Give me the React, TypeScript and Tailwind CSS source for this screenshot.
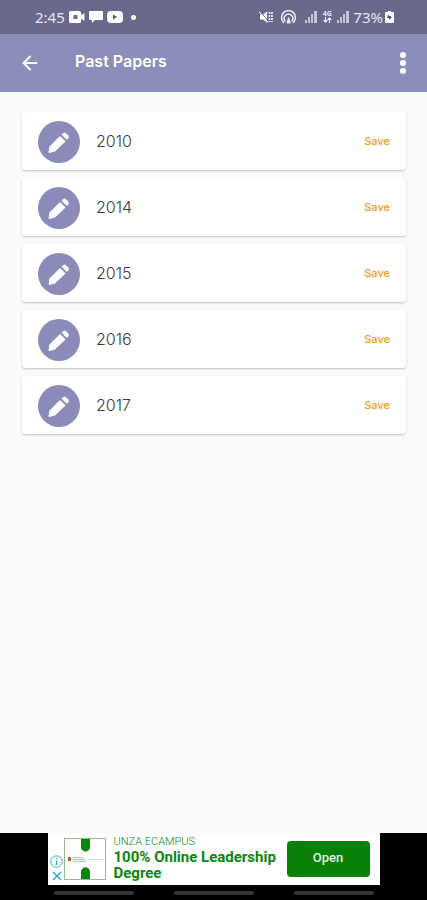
import { ArrowLeft } from 'lucide-react'

const papers = ['2010', '2014', '2015', '2016', '2017']

function SignalIcon() {
  return (
    <svg width="12" height="12" viewBox="0 0 12 12" fill="#dcdcea" aria-hidden="true">
      <rect x="0" y="9" width="2" height="3" opacity=".8" />
      <rect x="3" y="6" width="2" height="6" opacity=".8" />
      <rect x="6" y="3" width="2" height="9" opacity=".8" />
      <rect x="9" y="0" width="3" height="12" opacity=".8" />
    </svg>
  )
}

function StatusBar() {
  return (
    <div className="flex h-[34px] items-center justify-between bg-[#68698b] pl-[35px] pr-[33px] font-['Noto_Sans',sans-serif] text-[15px] text-[#e6e6f0]">
      <div className="flex items-center">
        <span className="w-[34px]">2:45</span>
        <svg width="16" height="12" viewBox="0 0 16 12" fill="#fff" aria-hidden="true">
          <path
            fillRule="evenodd"
            d="M1.5 0h9A1.5 1.5 0 0 1 12 1.5V3.500h2l.5-1h1v7h-1l-.5-1h-2v2A1.500 1.500 0 0 1 10.500 12h-9A1.500 1.500 0 0 1 0 10.500v-9A1.500 1.500 0 0 1 1.500 0ZM4.500 4v4h4V4Z"
          />
        </svg>
        <svg className="ml-1" width="14" height="12" viewBox="0 0 14 12" fill="#fff" aria-hidden="true">
          <path d="M1 0h12q1 0 1 1v7q0 1-1 1H6l-3 3V9H1Q0 9 0 8V1q0-1 1-1Z" />
        </svg>
        <svg className="ml-1" width="16" height="12" viewBox="0 0 16 12" aria-hidden="true">
          <rect width="16" height="12" rx="4" fill="#fff" />
          <path d="M6 3.500v5L10 6Z" fill="#55567c" />
        </svg>
        <span className="ml-[8px] size-[5px] rounded-full bg-white" />
      </div>
      <div className="flex items-center">
        <svg width="14" height="14" viewBox="0 0 14 14" fill="none" stroke="#fff" aria-hidden="true">
          <path d="M1 4.500h3l4-3v11l-4-3H1Z" fill="#fff" stroke="none" />
          <path d="M1 1l8 10" stroke="#68698b" />
          <path d="M0 1.500l9 11" />
          <path d="M10.500 2v10M13 2v10" strokeWidth="1.500" strokeDasharray="2 1" />
        </svg>
        <svg className="ml-[7px]" width="17" height="14" viewBox="0 0 17 14" fill="none" stroke="#eeeef6" strokeWidth="1.500" strokeLinecap="round" aria-hidden="true">
          <path d="M3.500 12.500a7 7 0 1 1 10 0" />
          <path d="M5 11a4.300 4.300 0 1 1 7 0" />
          <path d="M8.500 8l-1.500 5h3Z" fill="#eeeef6" strokeWidth="1" />
        </svg>
        <span className="ml-2">
          <SignalIcon />
        </span>
        <span className="ml-1 flex w-[12px] flex-col items-center text-[7px] leading-[6px] font-bold">
          <span>4G</span>
          <svg width="9" height="6" viewBox="0 0 9 6" fill="#eeeef6" aria-hidden="true">
            <path d="M2 0h1v3h2L2.500 6 0 3h2ZM6 6h1V3h2L6.500 0 4 3h2Z" />
          </svg>
        </span>
        <span className="ml-1">
          <SignalIcon />
        </span>
        <span className="ml-1">73%</span>
        <svg className="ml-[2px]" width="9" height="12" viewBox="0 0 9 12" aria-hidden="true">
          <path d="M3 0h3v1h2q1 0 1 1v9q0 1-1 1H1q-1 0-1-1V2q0-1 1-1h2Z" fill="#fff" />
          <path d="M3 4l4 2-3 3V7H2Z" fill="#4d4e73" />
        </svg>
      </div>
    </div>
  )
}

function PencilBadge() {
  return (
    <svg className="mt-[2px] shrink-0" width="42" height="42" viewBox="0 0 42 42" aria-hidden="true">
      <circle cx="21" cy="21" r="21" fill="#8b8bba" />
      <path d="M11 31.500L12 25.500 22 15.500l5 5L17 30Z" fill="#fff" stroke="#fff" strokeLinejoin="round" />
      <path d="M24 13.500l1.300-1.100q1.200-.9 2.600.2l1.900 1.900q1.200 1.400.2 2.700L28.800 18.400Z" fill="#fff" stroke="#fff" strokeLinejoin="round" />
    </svg>
  )
}

function PaperCard({ year }: { year: string }) {
  return (
    <li className="flex h-[58px] items-center rounded-[3px] bg-white px-4 shadow-[0_1px_2px_rgba(0,0,0,0.22)]">
      <PencilBadge />
      <span className="ml-4 flex-1 font-[Inter,sans-serif] text-[16px] font-light text-[#3c3c3c]">{year}</span>
      <button type="button" aria-label={`Save ${year}`} className="font-[Inter,sans-serif] text-[11px] font-medium text-[#f39a12]">
        Save
      </button>
    </li>
  )
}

function AdBanner() {
  return (
    <div className="mx-auto flex h-[52px] w-full max-w-[332px] bg-white font-[Roboto,sans-serif] text-[#0b860b]">
      <div className="flex w-4 flex-col items-center justify-end gap-[3px] pb-1 pl-[2px]">
        <svg width="13" height="13" viewBox="0 0 13 13" fill="none" stroke="#35abc9" aria-hidden="true">
          <circle cx="6.500" cy="6.500" r="5.700" />
          <path d="M6.500 5.500V10M6.500 3v1.300" strokeWidth="1.500" />
        </svg>
        <button type="button" aria-label="Close ad">
          <svg className="block" width="10" height="10" viewBox="0 0 10 10" stroke="#35abc9" strokeWidth="1.500" aria-hidden="true">
            <path d="M1 1l8 8M9 1L1 9" />
          </svg>
        </button>
      </div>
      <svg className="mt-1 shrink-0" width="42" height="44" viewBox="0 0 42 44" aria-hidden="true">
        <rect x=".5" y="1.500" width="41" height="41" fill="#fff" stroke="#94b994" />
        <path d="M17 2h9v9q0 1-1.500 2.200Q23 14.500 21.500 14.500T18.500 13.200Q17 12 17 11Z" fill="#0b860b" />
        <path d="M17 42h9v-8q0-1-1.500-2.500-1.500-1.300-3-1.300t-3 1.300Q17 33 17 34Z" fill="#0b860b" />
        <rect x="4" y="20" width="3" height="4" fill="#b8612b" />
        <path d="M9 20.500h10M9 22.500h12M9 24.500h13" stroke="#a5cda5" />
        <path d="M24 22.500h16" stroke="#d5e5d5" />
      </svg>
      <div className="ml-2 min-w-0 flex-1 pt-[2px]">
        <p className="text-[11px] leading-[14px] font-light">UNZA ECAMPUS</p>
        <p className="text-[15px] leading-4 font-bold">100% Online Leadership Degree</p>
      </div>
      <button type="button" className="mt-2 mr-[10px] h-9 w-[83px] rounded-[4px] bg-[#098109] pb-[2px] text-[13px] font-medium text-[#e2f2e2]">
        Open
      </button>
    </div>
  )
}

export default function App() {
  return (
    <div className="flex min-h-screen flex-col bg-[#fafafa]">
      <StatusBar />
      <header className="flex h-[58px] items-center bg-[#8b8dba] pr-[21px] pl-[19px] text-white">
        <button type="button" aria-label="Back">
          <ArrowLeft size={22} strokeWidth={2.2} />
        </button>
        <h1 className="ml-[34px] flex-1 pb-1 font-[Inter,sans-serif] text-[16px] font-semibold">Past Papers</h1>
        <button type="button" aria-label="More options" className="flex flex-col gap-[2px]">
          <span className="size-[6px] rounded-full bg-white" />
          <span className="size-[6px] rounded-full bg-white" />
          <span className="size-[6px] rounded-full bg-white" />
        </button>
      </header>

      <main className="flex-1 pt-5 pr-[21px] pl-[22px]">
        <ul className="flex flex-col gap-2">
          {papers.map(year => (
            <PaperCard key={year} year={year} />
          ))}
        </ul>
      </main>

      <footer className="bg-black">
        <AdBanner />
        {/* System navigation hints */}
        <div className="flex h-[15px] items-center justify-center gap-10">
          <span className="h-1 w-20 rounded-full bg-[#333]" />
          <span className="h-1 w-20 rounded-full bg-[#333]" />
          <span className="h-1 w-20 rounded-full bg-[#333]" />
        </div>
      </footer>
    </div>
  )
}
